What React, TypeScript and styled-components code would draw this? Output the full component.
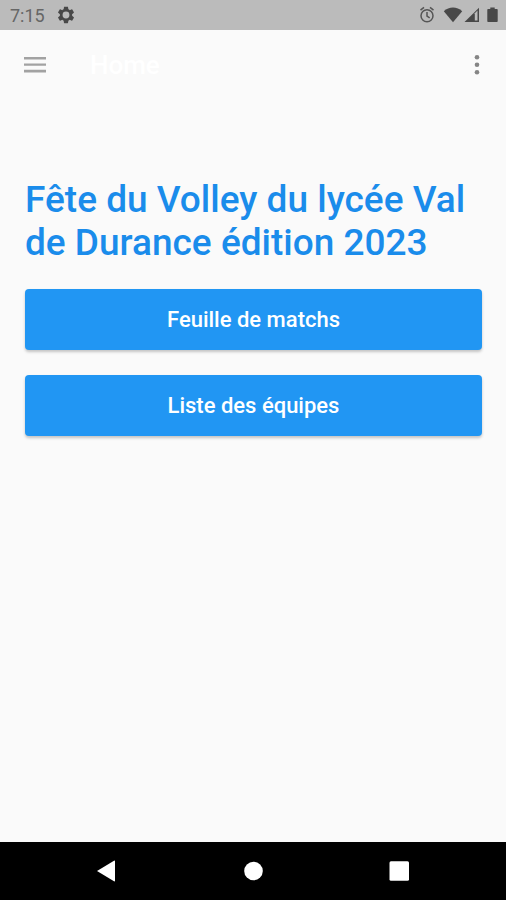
import React from "react";
import styled, { createGlobalStyle } from "styled-components";

const GlobalStyle = createGlobalStyle`
  *, *::before, *::after { box-sizing: border-box; }
  body {
    margin: 0;
    background: #fafafa;
    font-family: Roboto, "Liberation Sans", sans-serif;
  }
`;

const Screen = styled.div`
  display: flex;
  flex-direction: column;
  min-height: 100vh;
  background: #fafafa;
`;

const StatusBar = styled.header`
  display: flex;
  align-items: center;
  justify-content: space-between;
  height: 30px;
  padding: 0 8px 0 10px;
  background: #bbbbbb;
  color: #484848;
`;

const StatusGroup = styled.div`
  display: flex;
  align-items: center;
  gap: 12px;

  svg { display: block; }
`;

const Clock = styled.time`
  font-size: 18px;
  line-height: 30px;
  padding-top: 2px;
  color: #666666;
`;

const AppBar = styled.div`
  display: flex;
  align-items: center;
  height: 70px;
  padding: 0 15px 0 16px;
`;

const IconButton = styled.button`
  display: flex;
  align-items: center;
  justify-content: center;
  width: 38px;
  height: 38px;
  padding: 0;
  border: 0;
  background: transparent;
  color: #a2a2a2;
  cursor: pointer;
`;

const AppTitle = styled.span`
  flex: 1;
  padding-left: 36px;
  font-size: 26px;
  font-weight: 500;
  line-height: 32px;
  color: #ffffff;
`;

const Content = styled.main`
  flex: 1;
  display: flex;
  flex-direction: column;
  gap: 25px;
  padding: 78px 24px 24px 25px;
`;

const Heading = styled.h1`
  margin: 0;
  font-size: 37px;
  font-weight: 500;
  line-height: 43px;
  color: #1a8ceb;
`;

const ActionButton = styled.button`
  width: 100%;
  height: 61px;
  border: 0;
  border-radius: 4px;
  background: #2196f3;
  box-shadow: 0 2px 3px rgba(0, 0, 0, 0.22);
  color: #ffffff;
  font-family: inherit;
  font-size: 22px;
  font-weight: 500;
  cursor: pointer;
`;

const NavBar = styled.nav`
  display: grid;
  grid-template-columns: 1fr 108px 1fr;
  align-items: center;
  height: 58px;
  padding: 0 87px;
  background: #000000;
`;

const NavButton = styled.button<{ $align: string }>`
  display: block;
  width: 38px;
  height: 38px;
  padding: 0;
  border: 0;
  background: transparent;
  color: #ffffff;
  justify-self: ${(p) => p.$align};
  cursor: pointer;

  svg { display: block; }
`;

export default function App() {
  return (
    <Screen>
      <GlobalStyle />
      <StatusBar>
        <StatusGroup>
          <Clock>7:15</Clock>
          <svg width="18" height="18" viewBox="1 1 22 22" fill="currentColor" aria-hidden="true">
            <path d="M19.43 12.98c.04-.32.07-.64.07-.98s-.03-.66-.07-.98l2.11-1.65c.19-.15.24-.42.12-.64l-2-3.46c-.12-.22-.39-.3-.61-.22l-2.490 1c-.52-.4-1.080-.73-1.690-.98l-.38-2.650C14.460 2.180 14.250 2 14 2h-4c-.25 0-.46.18-.49.42l-.38 2.650c-.61.25-1.170.59-1.690.98l-2.490-1c-.23-.09-.49 0-.61.22l-2 3.460c-.13.22-.07.49.12.64l2.110 1.650c-.04.32-.07.65-.07.98s.03.66.07.98l-2.110 1.650c-.19.15-.24.42-.12.64l2 3.460c.12.22.39.3.61.22l2.490-1c.52.4 1.080.73 1.690.98l.38 2.650c.03.24.24.42.49.42h4c.25 0 .46-.18.49-.42l.38-2.650c.61-.25 1.170-.59 1.690-.98l2.490 1c.23.09.49 0 .61-.22l2-3.460c.12-.22.07-.49-.12-.64l-2.110-1.650zM12 16.200a4.200 4.200 0 1 1 0-8.400 4.200 4.200 0 0 1 0 8.400z" />
          </svg>
        </StatusGroup>
        <StatusGroup>
          <svg width="78" height="18" viewBox="0 0 78 18" aria-hidden="true">
            <g fill="none" stroke="#555555" strokeWidth="1.5">
              <circle cx="7" cy="9.8" r="6" />
              <path d="M.5 4.2 4 1.3M13.500 4.200 10 1.300M7 6v4l2.700 1.800" />
            </g>
            <path fill="#484848" d="M23.800 5.300C29 .3 37 .3 42.200 5.300L33 16.300z" />
            <path fill="#484848" d="M44.500 16 59 1.700V16z" />
            <path fill="#bbbbbb" d="M54.800 7.300 57.500 4.600V14.600H54.800z" />
            <path fill="#484848" d="M70.300 1.500h4.400V3.100h2c.6 0 1 .4 1 1V15c0 .6-.4 1-1 1h-8.400c-.6 0-1-.4-1-1V4.100c0-.6.4-1 1-1h2z" />
          </svg>
        </StatusGroup>
      </StatusBar>

      <AppBar>
        <IconButton aria-label="Menu">
          <svg width="24" height="16" viewBox="0 0 24 16" fill="currentColor" aria-hidden="true">
            <path d="M1 0h22v2.600H1zM1 6.500h22v2.300H1zM1 12.800h22v2.600H1z" />
          </svg>
        </IconButton>
        <AppTitle>Home</AppTitle>
        <IconButton aria-label="Plus d’options">
          <svg width="22" height="22" viewBox="0 0 22 22" fill="#858585" aria-hidden="true">
            <circle cx="16" cy="3.300" r="2.300" />
            <circle cx="16" cy="10.800" r="2.300" />
            <circle cx="16" cy="18.300" r="2.300" />
          </svg>
        </IconButton>
      </AppBar>

      <Content>
        <Heading>Fête du Volley du lycée Val de Durance édition 2023</Heading>
        <ActionButton>Feuille de matchs</ActionButton>
        <ActionButton>Liste des équipes</ActionButton>
      </Content>

      <NavBar>
        <NavButton $align="start" aria-label="Retour">
          <svg width="38" height="38" viewBox="0 0 38 38" fill="currentColor" aria-hidden="true">
            <path d="M10 19 27 8.700q1-.5 1 .6v19.400q0 1.100-1 .6z" />
          </svg>
        </NavButton>
        <NavButton $align="center" aria-label="Accueil">
          <svg width="38" height="38" viewBox="0 0 38 38" fill="currentColor" aria-hidden="true">
            <circle cx="19.500" cy="19" r="9.300" />
          </svg>
        </NavButton>
        <NavButton $align="end" aria-label="Applications récentes">
          <svg width="38" height="38" viewBox="0 0 38 38" fill="currentColor" aria-hidden="true">
            <rect x="8.500" y="9.300" width="19.500" height="19.500" rx="1.500" />
          </svg>
        </NavButton>
      </NavBar>
    </Screen>
  );
}
